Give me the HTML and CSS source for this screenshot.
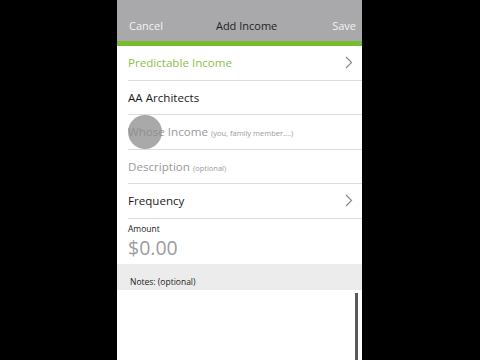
FILE: index.html
```html
<!DOCTYPE html>
<html>
<head>
<meta charset="utf-8">
<link rel="stylesheet" href="styles.css">
</head>
<body>
<div class="phone">
  <header class="topbar">
    <span class="tb-btn">Cancel</span>
    <span class="tb-title">Add Income</span>
    <span class="tb-btn">Save</span>
  </header>
  <div class="accent"></div>
  <div class="list">
    <div class="row">
      <span class="txt green">Predictable Income</span>
      <svg class="chev" width="8" height="13" viewBox="0 0 8 13"><polyline points="1,1 6.5,6.5 1,12" fill="none" stroke="#8a8a8a" stroke-width="1.2"/></svg>
    </div>
    <div class="row"><span class="txt">AA Architects</span></div>
    <div class="row"><span class="txt muted">Whose Income <small>(you, family member....)</small></span></div>
    <div class="row"><span class="txt muted">Description <small>(optional)</small></span></div>
    <div class="row">
      <span class="txt">Frequency</span>
      <svg class="chev" width="8" height="13" viewBox="0 0 8 13"><polyline points="1,1 6.5,6.5 1,12" fill="none" stroke="#8a8a8a" stroke-width="1.2"/></svg>
    </div>
  </div>
  <div class="amount">
    <div class="amt-label">Amount</div>
    <div class="amt-value">$0.00</div>
  </div>
  <div class="notes-head">Notes: (optional)</div>
  <div class="notes">
    <div class="scrollbar"></div>
  </div>
  <div class="touch"></div>
</div>
</body>
</html>
```

FILE: styles.css
```css
html, body {
  margin: 0;
  padding: 0;
  background: #000;
  height: 360px;
  overflow: hidden;
}
.phone {
  position: relative;
  width: 245px;
  height: 360px;
  margin-left: 117px;
  background: #fff;
  font-family: "Open Sans", "DejaVu Sans", sans-serif;
  display: flex;
  flex-direction: column;
}
.topbar {
  height: 41px;
  background: #a9a9ab;
  display: flex;
  align-items: center;
  justify-content: space-between;
  padding: 0 6px 0 12px;
  box-sizing: border-box;
}
.tb-btn {
  color: #f2f2f2;
  font-size: 11px;
  padding-top: 9px;
}
.tb-title {
  color: #1e1e1e;
  font-size: 11px;
  padding-top: 9px;
  margin-left: -2px;
}
.accent {
  height: 5px;
  background: #76bc2e;
}
.list {
  display: flex;
  flex-direction: column;
}
.row {
  height: 33.5px;
  margin-left: 11px;
  border-bottom: 1px solid #dcdcdc;
  display: flex;
  align-items: center;
  justify-content: space-between;
  padding-right: 9px;
}
.txt {
  font-size: 11.6px;
  color: #1c1c1c;
}
.txt.green { color: #8dbf49; }
.txt.muted { color: #9a9a9a; }
.txt small {
  font-size: 7.5px;
  color: #9a9a9a;
}
.chev { display: block; }
.amount {
  height: 45px;
  padding-left: 11px;
  display: flex;
  flex-direction: column;
}
.amt-label {
  font-size: 8.5px;
  color: #222;
  margin-top: 4px;
  line-height: 12px;
}
.amt-value {
  font-size: 19.5px;
  color: #9c9c9c;
  line-height: 24px;
  margin-top: 1px;
}
.notes-head {
  height: 26px;
  background: #ececec;
  font-size: 8.5px;
  color: #222;
  padding-left: 13px;
  box-sizing: border-box;
  padding-top: 12px;
}
.notes {
  flex: 1;
  position: relative;
  background: #fff;
}
.scrollbar {
  position: absolute;
  right: 4px;
  top: 3px;
  bottom: 0;
  width: 3px;
  background: #5a5a5a;
}
.touch {
  position: absolute;
  left: 11px;
  top: 115px;
  width: 34px;
  height: 34px;
  border-radius: 50%;
  background: rgba(140, 140, 140, 0.75);
}
```
